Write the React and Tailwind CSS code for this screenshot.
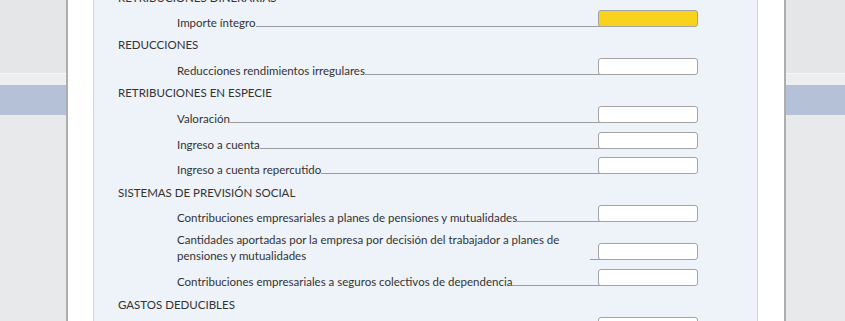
import React from "react";

const font = { fontFamily: "Lato, 'Open Sans', sans-serif" };

function Heading({ children, className = "" }) {
  return (
    <div className={"h-[16px] leading-[16px] text-[11.5px] text-[#333333] " + className}>
      {children}
    </div>
  );
}

function Item({ label, yellow = false, className = "mt-[9px]", twoLine = false }) {
  return (
    <div className={"flex items-end pl-[59px] " + className}>
      {twoLine ? (
        <>
          <div className="flex-1 -mb-[4px] leading-[16px] text-[11.5px] text-[#333333]">{label}</div>
          <div className="w-[12px] -mr-[4px] border-b border-[#9c9c9c]" />
        </>
      ) : (
        <>
          <div className="-mb-[4px] leading-[16px] text-[11.5px] text-[#333333] whitespace-nowrap">{label}</div>
          <div className="flex-1 -mr-[4px] border-b border-[#9c9c9c]" />
        </>
      )}
      <div
        className={
          "w-[100px] h-[17px] rounded-[3px] border border-[#a3a3a3] shrink-0 " +
          (yellow ? "bg-[#f8d21c]" : "bg-white")
        }
      />
    </div>
  );
}

function SideBg() {
  return (
    <div className="flex flex-col h-full">
      <div className="h-[73px] bg-[#e5e6e8]" />
      <div className="h-px bg-[#f6f6f7]" />
      <div className="h-[11px] bg-[#edeef0]" />
      <div className="h-[30px] bg-[#b5c1d7]" />
      <div className="flex-1 bg-[#e8e9eb]" />
    </div>
  );
}

export default function App() {
  return (
    <div className="w-[845px] h-[321px] overflow-hidden flex bg-[#e8e9eb]" style={font}>
      <div className="w-[66px] shrink-0">
        <SideBg />
      </div>
      <div className="w-[720px] shrink-0 bg-white border-x-2 border-[#aeaeae] px-[25px] flex">
        <div className="w-[665px] bg-[#eef2f9] border-x border-[#cfd3da] overflow-hidden">
          <div className="pl-[24px] pr-[59px] -mt-[10px]">
            <Heading>RETRIBUCIONES DINERARIAS</Heading>
            <Item label="Importe íntegro" yellow className="mt-[4px]" />
            <Heading className="mt-[10px]">REDUCCIONES</Heading>
            <Item label="Reducciones rendimientos irregulares" className="mt-[5px]" />
            <Heading className="mt-[10px]">RETRIBUCIONES EN ESPECIE</Heading>
            <Item label="Valoración" className="mt-[5px]" />
            <Item label="Ingreso a cuenta" className="mt-[9px]" />
            <Item label="Ingreso a cuenta repercutido" className="mt-[8px]" />
            <Heading className="mt-[11px]">SISTEMAS DE PREVISIÓN SOCIAL</Heading>
            <Item
              label="Contribuciones empresariales a planes de pensiones y mutualidades"
              className="mt-[4px]"
            />
            <Item
              twoLine
              label={
                <>
                  Cantidades aportadas por la empresa por decisión del trabajador a planes de
                  <br />
                  pensiones y mutualidades
                </>
              }
              className="mt-[10px]"
            />
            <Item
              label="Contribuciones empresariales a seguros colectivos de dependencia"
              className="mt-[9px]"
            />
            <Heading className="mt-[11px]">GASTOS DEDUCIBLES</Heading>
            <Item label="" className="mt-[4px]" />
          </div>
        </div>
      </div>
      <div className="flex-1">
        <SideBg />
      </div>
    </div>
  );
}
